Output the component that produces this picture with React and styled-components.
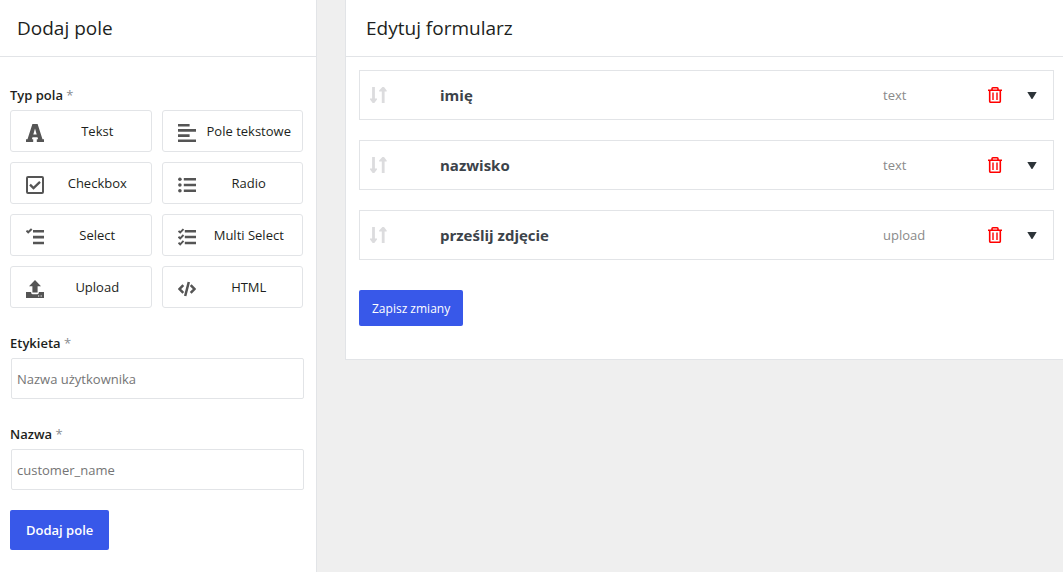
import React, { useState } from 'react';
import styled, { createGlobalStyle } from 'styled-components';

const GlobalStyle = createGlobalStyle`
  * {
    box-sizing: border-box;
  }

  body {
    margin: 0;
    background: #efefef;
    color: #1d1f21;
    font-family: 'Segoe UI', 'Open Sans', 'Noto Sans', sans-serif;
    font-size: 13px;
    line-height: 20px;
  }

  button,
  input {
    font: inherit;
    color: inherit;
  }
`;

const Page = styled.div`
  display: grid;
  grid-template-columns: 317px minmax(0, 1fr);
  column-gap: 28px;
  min-height: 100vh;
`;

const Sidebar = styled.aside`
  background: #fff;
  border-right: 1px solid #e2e4e7;
`;

const Panel = styled.main`
  align-self: start;
  background: #fff;
  border: 1px solid #e2e4e7;
  border-width: 0 0 1px 1px;
`;

const PanelHeader = styled.header`
  padding: 14px ${(props) => props.$inset}px;
  border-bottom: 1px solid #e2e4e7;
`;

const PanelTitle = styled.h2`
  margin: 0;
  font-size: 19px;
  font-weight: 400;
  line-height: 28px;
`;

const AddForm = styled.form`
  display: flex;
  flex-direction: column;
  align-items: flex-start;
  padding: 28px 13px 22px 10px;
`;

const Field = styled.div`
  width: 100%;
  margin-bottom: ${(props) => (props.$last ? 20 : 25)}px;
`;

const Label = styled.label`
  display: block;
  margin-bottom: 5px;
  font-weight: 600;
`;

const Required = styled.span`
  color: #8a8d91;
  font-weight: 400;
`;

const TypeGrid = styled.div`
  display: grid;
  grid-template-columns: 1fr 1fr;
  gap: 10px;
`;

const TypeButton = styled.button`
  display: flex;
  align-items: center;
  gap: 10px;
  height: 42px;
  padding: 0 10px 0 15px;
  background: #fff;
  border: 1px solid #e2e4e7;
  border-radius: 3px;
  cursor: pointer;

  svg {
    flex: none;
    margin-top: 4px;
    color: #555;
  }
`;

const TypeName = styled.span`
  flex: 1;
  text-align: center;
  white-space: nowrap;
`;

const TextInput = styled.input`
  display: block;
  width: 100%;
  height: 41px;
  margin-left: 1px;
  padding: 0 5px;
  background: #fff;
  border: 1px solid #e2e4e7;
  border-radius: 2px;

  &::placeholder {
    color: #757575;
    opacity: 1;
  }
`;

const PrimaryButton = styled.button`
  height: ${(props) => (props.$small ? 36 : 40)}px;
  padding: ${(props) => (props.$small ? '2px 13px 0' : '0 16px')};
  background: #3858e9;
  border: 0;
  border-radius: 2px;
  color: #fff;
  font-size: ${(props) => (props.$small ? 12 : 13)}px;
  font-weight: ${(props) => (props.$small ? 400 : 600)};
  white-space: nowrap;
  cursor: pointer;
`;

const EditForm = styled.form`
  padding: 13px 9px 33px 13px;
`;

const FieldList = styled.ul`
  display: flex;
  flex-direction: column;
  gap: 20px;
  margin: 0 0 30px;
  padding: 0;
  list-style: none;
`;

const FieldRow = styled.li`
  display: grid;
  grid-template-columns: 70px minmax(0, 1fr) 105px 39px 10px;
  align-items: center;
  height: 50px;
  padding: 0 16px 0 10px;
  border: 1px solid #e2e4e7;
`;

const FieldName = styled.strong`
  color: #3c434a;
  font-size: 15px;
  font-weight: 700;
`;

const FieldType = styled.span`
  color: #8a8a8a;
`;

const IconButton = styled.button`
  display: flex;
  justify-self: start;
  padding: 0;
  background: none;
  border: 0;
  color: ${(props) => props.$color};
  cursor: ${(props) => props.$cursor || 'pointer'};
`;

const Icon = ({ width = 18, height = 18, children }) => (
  <svg width={width} height={height} viewBox={`0 0 ${width} ${height}`} fill="currentColor" aria-hidden="true">
    {children}
  </svg>
);

const FontIcon = () => (
  <Icon>
    <path
      fillRule="evenodd"
      d="M6.4 0h5.2l4.9 15.2H18V18h-7.2v-2.8h1.3l-.6-2H6.5l-.6 2h1.3V18H0v-2.8h1.5L6.4 0zM9 4.6L7.3 10.4h3.4L9 4.6z"
    />
  </Icon>
);

const AlignIcon = () => (
  <Icon>
    <path d="M0 0h11.6v2.5H0zM0 5h18v2.8H0zM0 10.3h11.6v2.6H0zM0 15.4h18V18H0z" />
  </Icon>
);

const CheckIcon = () => (
  <Icon>
    <rect x="1" y="1" width="16" height="16" rx="1" fill="none" stroke="currentColor" strokeWidth="2" />
    <path d="M4 8.6l3.5 3.5L14 5.8" fill="none" stroke="currentColor" strokeWidth="2.3" />
  </Icon>
);

const RadioIcon = () => (
  <Icon>
    <circle cx="1.9" cy="3.2" r="1.8" />
    <circle cx="1.9" cy="9" r="1.8" />
    <circle cx="1.9" cy="14.8" r="1.8" />
    <path d="M5.8 2h12.2v2.5H5.8zM5.8 7.8h12.2v2.5H5.8zM5.8 13.5h12.2V16H5.8z" />
  </Icon>
);

const SelectIcon = () => (
  <Icon>
    <path d="M.5 2.6l1.7 1.7L5.7 1" fill="none" stroke="currentColor" strokeWidth="2" />
    <path d="M7 2h11v2.6H7zM7 7.8h11v2.6H7zM7 13.7h11v2.6H7z" />
  </Icon>
);

const MultiSelectIcon = () => (
  <Icon>
    <path
      d="M.5 2.9l1.7 1.6L5.5 1.1M.5 8.8l1.7 1.6L5.5 7M.5 14.7l1.7 1.6 3.3-3.4"
      fill="none"
      stroke="currentColor"
      strokeWidth="1.9"
    />
    <path d="M6.8 2H18v2.5H6.8zM6.8 7.8H18v2.5H6.8zM6.8 13.7H18v2.5H6.8z" />
  </Icon>
);

const UploadIcon = () => (
  <Icon>
    <path d="M9 0l6 6.2h-3.4v6.4H6.4V6.2H3z" />
    <path
      fillRule="evenodd"
      d="M0 12h5.2v.8c0 .8.6 1.4 1.4 1.4h4.8c.8 0 1.4-.6 1.4-1.4V12H18v6H0v-6zm12 3.6v1h1.2v-1H12zm2.6 0v1h1.2v-1h-1.2z"
    />
  </Icon>
);

const CodeIcon = () => (
  <Icon>
    <path
      d="M5.3 5.2L1.6 9l3.7 3.8M12.7 5.2L16.4 9l-3.7 3.8M10.8 2L7.2 16"
      fill="none"
      stroke="currentColor"
      strokeWidth="2.5"
    />
  </Icon>
);

const SortIcon = () => (
  <Icon width={17} height={16}>
    <path d="M2.1 0h2.8v11.6H7v.8L4.3 16H2.7L0 12.4v-.8h2.1zM11.8 16h2.8V4.4h2.1v-.8L14 0h-1.6L9.1 3.6v.8h2.7z" />
  </Icon>
);

const TrashIcon = () => (
  <Icon width={14} height={16}>
    <path
      d="M0 3.2h14M1.7 3.2v11.1c0 .6.4 1 1 1h8.6c.6 0 1-.4 1-1V3.2M4 3V1.7c0-.5.4-.9.9-.9h4.2c.5 0 .9.4.9.9V3"
      fill="none"
      stroke="currentColor"
      strokeWidth="1.6"
    />
    <path d="M5 5.5v7.5M9 5.5v7.5" fill="none" stroke="currentColor" strokeWidth="1.4" />
  </Icon>
);

const CaretIcon = () => (
  <Icon width={10} height={8}>
    <path d="M.3 1h9.4L5.4 8h-.8z" />
  </Icon>
);

const fieldTypes = [
  { name: 'Tekst', icon: FontIcon },
  { name: 'Pole tekstowe', icon: AlignIcon },
  { name: 'Checkbox', icon: CheckIcon },
  { name: 'Radio', icon: RadioIcon },
  { name: 'Select', icon: SelectIcon },
  { name: 'Multi Select', icon: MultiSelectIcon },
  { name: 'Upload', icon: UploadIcon },
  { name: 'HTML', icon: CodeIcon },
];

const initialFields = [
  { id: 1, label: 'imię', type: 'text' },
  { id: 2, label: 'nazwisko', type: 'text' },
  { id: 3, label: 'prześlij zdjęcie', type: 'upload' },
];

const AddFieldForm = () => {
  const [label, setLabel] = useState('');
  const [name, setName] = useState('');

  return (
    <AddForm onSubmit={(e) => e.preventDefault()}>
      <Field>
        <Label as="div" id="field-type">
          Typ pola <Required>*</Required>
        </Label>
        <TypeGrid role="group" aria-labelledby="field-type">
          {fieldTypes.map(({ name: typeName, icon: TypeIcon }) => (
            <TypeButton key={typeName} type="button">
              <TypeIcon />
              <TypeName>{typeName}</TypeName>
            </TypeButton>
          ))}
        </TypeGrid>
      </Field>
      <Field>
        <Label htmlFor="field-label">
          Etykieta <Required>*</Required>
        </Label>
        <TextInput
          id="field-label"
          type="text"
          placeholder="Nazwa użytkownika"
          value={label}
          onChange={(e) => setLabel(e.target.value)}
        />
      </Field>
      <Field $last>
        <Label htmlFor="field-name">
          Nazwa <Required>*</Required>
        </Label>
        <TextInput
          id="field-name"
          type="text"
          placeholder="customer_name"
          value={name}
          onChange={(e) => setName(e.target.value)}
        />
      </Field>
      <PrimaryButton type="submit">Dodaj pole</PrimaryButton>
    </AddForm>
  );
};

const App = () => {
  const [fields, setFields] = useState(initialFields);

  const removeField = (id) => {
    setFields(fields.filter((field) => field.id !== id));
  };

  return (
    <>
      <GlobalStyle />
      <Page>
        <Sidebar>
          <PanelHeader $inset={17}>
            <PanelTitle>Dodaj pole</PanelTitle>
          </PanelHeader>
          <AddFieldForm />
        </Sidebar>
        <Panel>
          <PanelHeader $inset={20}>
            <PanelTitle>Edytuj formularz</PanelTitle>
          </PanelHeader>
          <EditForm onSubmit={(e) => e.preventDefault()}>
            <FieldList>
              {fields.map((field) => (
                <FieldRow key={field.id}>
                  <IconButton type="button" $color="#dcdcde" $cursor="move" aria-label="Przenieś">
                    <SortIcon />
                  </IconButton>
                  <FieldName>{field.label}</FieldName>
                  <FieldType>{field.type}</FieldType>
                  <IconButton type="button" $color="#f00" aria-label="Usuń" onClick={() => removeField(field.id)}>
                    <TrashIcon />
                  </IconButton>
                  <IconButton type="button" $color="#2c3338" aria-label="Rozwiń">
                    <CaretIcon />
                  </IconButton>
                </FieldRow>
              ))}
            </FieldList>
            <PrimaryButton type="submit" $small>
              Zapisz zmiany
            </PrimaryButton>
          </EditForm>
        </Panel>
      </Page>
    </>
  );
};

export default App;
